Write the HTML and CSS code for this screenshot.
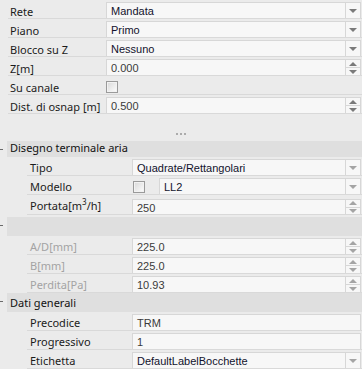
FILE: index.html
```html
<!DOCTYPE html>
<html lang="it">
  <head>
    <meta charset="UTF-8" />
    <link rel="stylesheet" href="styles.css">
    <title>Proprietà</title>
  </head>
  <body>
    <div class="grid">
      <div class="row">
        <span class="label">Rete</span>
        <div class="field"><span class="val">Mandata</span><span class="btn"><i class="down"></i></span></div>
      </div>
      <div class="row">
        <span class="label">Piano</span>
        <div class="field"><span class="val">Primo</span><span class="btn"><i class="down"></i></span></div>
      </div>
      <div class="row">
        <span class="label">Blocco su Z</span>
        <div class="field"><span class="val">Nessuno</span><span class="btn"><i class="down"></i></span></div>
      </div>
      <div class="row">
        <span class="label">Z[m]</span>
        <div class="field"><span class="val num">0.000</span><span class="btn spin"><b><i class="up"></i></b><b><i class="down"></i></b></span></div>
      </div>
      <div class="row">
        <span class="label">Su canale</span>
        <span class="check"></span>
      </div>
      <div class="row">
        <span class="label">Dist. di osnap [m]</span>
        <div class="field"><span class="val num">0.500</span><span class="btn spin"><b><i class="up"></i></b><b><i class="down"></i></b></span></div>
      </div>

      <div class="splitter"><i></i><i></i><i></i></div>

      <div class="cat first">Disegno terminale aria</div>
      <div class="row sub">
        <span class="label">Tipo</span>
        <div class="field"><span class="val">Quadrate/Rettangolari</span><span class="btn light"><i class="down"></i></span></div>
      </div>
      <div class="row sub">
        <span class="label">Modello</span>
        <span class="check"></span>
        <div class="field model"><span class="val">LL2</span><span class="btn light"><i class="down"></i></span></div>
      </div>
      <div class="row sub tall">
        <span class="label">Portata[m<sup>3</sup>/h]</span>
        <div class="field"><span class="val num">250</span><span class="btn spin light"><b><i class="up"></i></b><b><i class="down"></i></b></span></div>
      </div>
      <div class="cat blank"></div>
      <div class="row sub off">
        <span class="label">A/D[mm]</span>
        <div class="field"><span class="val num">225.0</span><span class="btn spin light"><b><i class="up"></i></b><b><i class="down"></i></b></span></div>
      </div>
      <div class="row sub off">
        <span class="label">B[mm]</span>
        <div class="field"><span class="val num">225.0</span><span class="btn spin light"><b><i class="up"></i></b><b><i class="down"></i></b></span></div>
      </div>
      <div class="row sub off">
        <span class="label">Perdita[Pa]</span>
        <div class="field"><span class="val num">10.93</span><span class="btn spin light"><b><i class="up"></i></b><b><i class="down"></i></b></span></div>
      </div>

      <div class="cat">Dati generali</div>
      <div class="row sub">
        <span class="label">Precodice</span>
        <div class="field"><span class="val num">TRM</span></div>
      </div>
      <div class="row sub">
        <span class="label">Progressivo</span>
        <div class="field"><span class="val num">1</span></div>
      </div>
      <div class="row sub">
        <span class="label">Etichetta</span>
        <div class="field"><span class="val">DefaultLabelBocchette</span><span class="btn light"><i class="down"></i></span></div>
      </div>
    </div>
  </body>
</html>
```

FILE: styles.css
```css
* {
  box-sizing: border-box;
}

body {
  margin: 0;
  background-color: #ebebeb;
  color: #1b1b1b;
  font-family: "Noto Sans", sans-serif;
  font-size: 11px;
  overflow: hidden;
}

.row {
  display: flex;
  height: 19px;
  margin-left: 8px;
  padding-right: 1px;
  border-bottom: 1px solid #d9d9d9;
}
.row.tall {
  height: 20px;
}
.row.tall .field {
  margin-top: 4px;
}

.label {
  flex: none;
  width: 98px;
  padding: 4px 0 0 2px;
  line-height: 15px;
  white-space: nowrap;
}
.label sup {
  font-size: 8px;
  line-height: 0;
}
.row.sub {
  margin-left: 27px;
}
.row.sub .label {
  width: 105px;
  padding: 3px 0 0 3px;
}
.row.off .label {
  color: #a3a3a3;
}

.field {
  flex: 1;
  display: flex;
  margin-top: 2px;
  border: 1px solid #d7d7d7;
  border-bottom: 0;
  background-color: #f7f7f7;
}
.field.model {
  margin-left: 14px;
}
.val {
  flex: 1;
  padding-left: 4px;
  font-family: "Liberation Sans", Arial, sans-serif;
  line-height: 16px;
  color: #12122c;
  white-space: nowrap;
  overflow: hidden;
}
.val.num {
  color: #3a3a3a;
}

.btn {
  flex: none;
  width: 15px;
  display: flex;
  align-items: center;
  justify-content: center;
  border-left: 1px solid #d7d7d7;
}
.btn.spin {
  flex-direction: column;
  align-items: stretch;
}
.btn.spin b {
  flex: 1;
  display: flex;
  align-items: center;
  justify-content: center;
}
.btn.spin b:first-child {
  border-bottom: 1px solid #d7d7d7;
}

.down,
.up {
  width: 0;
  height: 0;
  border-left: 4px solid transparent;
  border-right: 4px solid transparent;
}
.down {
  border-top: 4px solid #7a7a7a;
}
.up {
  border-bottom: 4px solid #7a7a7a;
}
.light .down {
  border-top-color: #a4a4a4;
}
.light .up {
  border-bottom-color: #a4a4a4;
}

.check {
  flex: none;
  width: 12px;
  height: 12px;
  margin-top: 5px;
  border: 1px solid #9a9a9a;
  background: linear-gradient(135deg, #d8d8d8, #fdfdfd);
  box-shadow: inset 0 0 0 1px #f2f2f2;
}
.row.sub .check {
  margin-left: 1px;
}

.splitter {
  display: flex;
  justify-content: center;
  gap: 2px;
  height: 27px;
  padding-top: 19px;
}
.splitter i {
  width: 2px;
  height: 2px;
  background-color: #ababab;
}

.cat {
  position: relative;
  height: 19px;
  margin-left: 7px;
  padding-left: 3px;
  line-height: 19px;
  background-color: #dfdfdf;
  color: #111;
}
.cat.first {
  height: 16px;
  line-height: 14px;
}
.cat.blank {
  margin-top: 2px;
}
.cat::before {
  content: "";
  position: absolute;
  left: -7px;
  top: 8px;
  width: 3px;
  height: 1px;
  background-color: #6a6a6a;
}
```
